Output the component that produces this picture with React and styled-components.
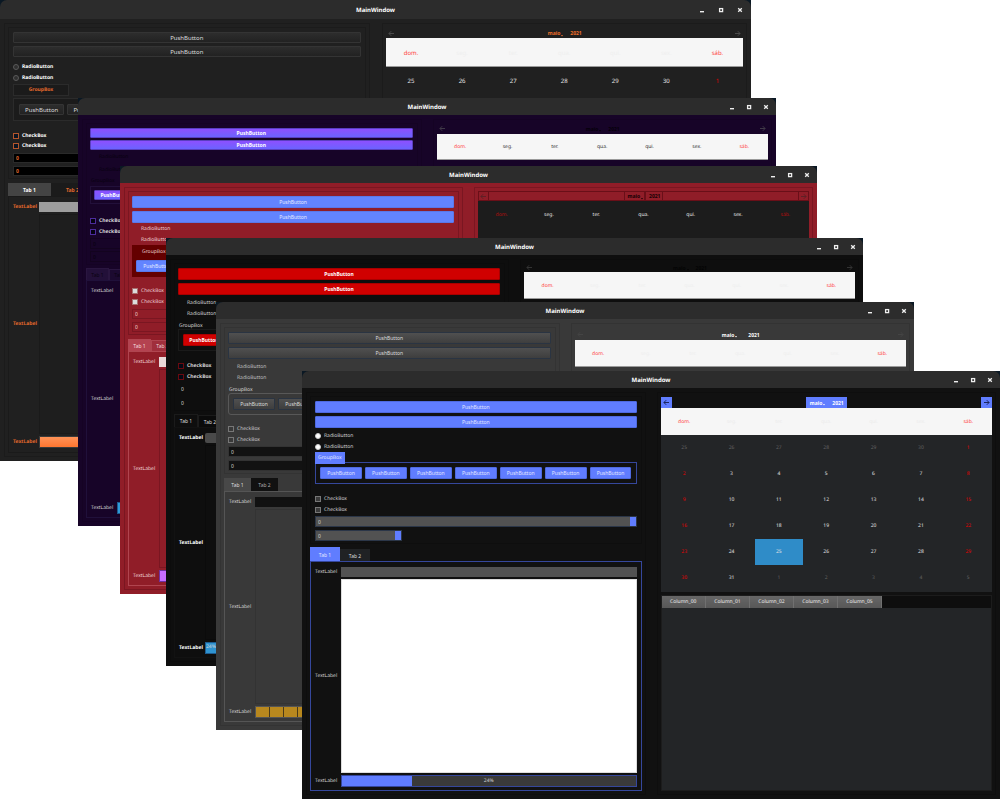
import React from "react";
import styled, { createGlobalStyle, css, ThemeProvider } from "styled-components";

const GlobalStyle = createGlobalStyle`
  *, *::before, *::after { box-sizing: border-box; }
  body { margin: 0; background: #fff; }
  button, input, textarea { font: inherit; color: inherit; margin: 0; padding: 0; border: 0; background: none; border-radius: 0; }
`;

/* ---------- themes ---------- */

const base = {
  titleH: 17, titleSize: 6, minH: 428, textSize: 5, buttonSize: 5, calendarSize: 5,
  bg: "#111", text: "#d4d4d4", frame: "#0d0d0d", panelGap: 11, padLeft: 3,
  btnH: 12, btnGap: 3, btnWeight: 400, btnText: "#ddd", btnBg: "#333", btnBorder: "transparent", btnRadius: 1,
  radioTop: 2, radioH: 11, radioText: "#d4d4d4", radioWeight: 400, radioBg: "transparent", radioBorder: "transparent",
  groupTop: 1, legendH: 11, legendOffset: -2, legendText: "#d4d4d4", legendBg: "transparent", legendBorder: "transparent",
  legendW: "auto", legendPad: 0, legendWeight: 400, groupBorder: "#1a1a1a", groupPad: 4, groupRadius: 0, groupBg: "transparent", enclosed: false,
  checkTop: 9, checkH: 11, checkBg: "transparent", checkBorder: "#666", checkText: "#d4d4d4", checkWeight: 400,
  spinTop: 1, spinH: 11, spinGap: 3, spinBg: "transparent", spinBorder: "transparent", spinText: "#d4d4d4", spinWeight: 400, stepper: "transparent",
  tabTop: 3, tabH: 14, tabW: 29, tabDrop: 2, tabActive: "#333", tabActiveText: "#ddd", tabIdle: "#222", tabIdleText: "#ddd", tabBorder: "transparent", tabWeight: 400,
  pageBorder: "#222", pagePad: "4px 4px 3px", labelText: "#d4d4d4", labelWeight: 400,
  lineBg: "#555", lineRadius: 0, editBg: "transparent", editBorder: "#111", barBg: "#3a3a3a", barBorder: "transparent", barFill: "#5c7cff",
  navH: 11, navTop: 0, navBtn: "transparent", navBorder: "transparent", navText: "#000", navArrow: "#333", navGap: 4,
  headBg: "#f6f6f6", headEdge: "#9a9a9a", headText: "#ececec", headRed: "#ff3a3a", headH: 27,
  gridBg: "#1c1c1c", rowH: 26, dayText: "#e4e4e4", dayOff: "#e4e4e4", dayRed: "#e80000",
};

const themes = {
  orange: {
    ...base, titleH: 19, minH: 461, buttonSize: 6, calendarSize: 6, panelGap: 12, padLeft: 4, bg: "#202020", frame: "#1b1b1b",
    btnH: 11, btnBg: "linear-gradient(#2d2d2d, #222)", btnBorder: "#343434",
    radioTop: 4, radioText: "#fff", radioWeight: 700, radioBg: "#303030", radioBorder: "#5a5a5a",
    legendH: 12, legendOffset: 2, legendText: "#e0672c", legendBg: "#1b1b1b", legendBorder: "#2b2b2b",
    legendW: "56px", legendWeight: 700, groupBorder: "#2b2b2b", groupPad: 5, groupBg: "#1b1b1b",
    checkTop: 10, checkH: 10, checkBg: "#0c1522", checkBorder: "#b4562c", checkText: "#fff", checkWeight: 700,
    spinTop: 2, spinH: 10, spinBg: "#000", spinBorder: "#2a2a2a", spinText: "#e0672c", spinWeight: 700,
    tabTop: 4, tabH: 13, tabW: 43, tabDrop: 0, tabActive: "#444", tabActiveText: "#fff", tabIdle: "#1b1b1b", tabIdleText: "#e0672c", tabWeight: 700,
    pageBorder: "#1a1a1a", pagePad: "4px 4px", labelText: "#e0672c", labelWeight: 700,
    lineBg: "#9e9e9e", editBg: "#1e1e1e", editBorder: "#1a1a1a", barFill: "linear-gradient(#ff9358, #ff7630)",
    navTop: 1, navH: 10, navText: "#f0702c", navArrow: "#4a4a4a", headH: 29, headText: "#efefef", gridBg: "#202020", rowH: 28,
  },
  violet: {
    ...base, bg: "#170428", frame: "#150324", btnH: 10, btnGap: 2, btnWeight: 700, btnText: "#fff",
    btnBg: "linear-gradient(#8d50ff, #6b63ff)", btnBorder: "#5a3fc0",
    radioTop: 0, radioH: 13, radioText: "#08010f", groupTop: 0, legendText: "#08010f", legendH: 10, legendOffset: 0, groupPad: 3, groupBorder: "#22103a",
    checkTop: 11, checkBg: "#050110", checkBorder: "#4c2c9c", checkWeight: 700,
    spinTop: 1, spinGap: 2, spinText: "#06010c", spinBorder: "#13031f",
    tabH: 12, tabW: 23, tabDrop: 1, tabActive: "#231039", tabActiveText: "#090210", tabIdle: "#1c0a30", tabIdleText: "#090210", tabBorder: "#2a1640",
    pageBorder: "#20103a", lineBg: "#170428", editBorder: "#170428", barFill: "#2f9bd8", barBorder: "#1d5c90",
    navText: "#050008", navArrow: "#403a48", headText: "#333", headH: 26, gridBg: "#170428",
  },
  crimson: {
    ...base, bg: "#901d28", frame: "#7a1621", text: "#eed4d6", btnBg: "#6284ff", btnBorder: "#5a78e8", btnText: "#e6eaff",
    radioTop: 0, radioText: "#eed4d6", groupTop: 0, enclosed: true, groupBg: "#640000", groupBorder: "#560000", legendText: "#e6caca", legendH: 14, legendOffset: 0, groupPad: 4,
    checkTop: 8, checkBg: "#dcdcdc", checkBorder: "#a87070", checkText: "#eed4d6",
    spinTop: 2, spinH: 10, spinText: "#eed4d6", spinBorder: "#7a1621",
    tabTop: 4, tabH: 12, tabW: 23, tabDrop: 1, tabActive: "#b44250", tabActiveText: "#f4dcde", tabIdle: "#a02f3c", tabIdleText: "#eed4d6", tabBorder: "#b04550",
    pageBorder: "#b04550", labelText: "#eed4d6", lineBg: "#e8d8d8", editBorder: "#7a1621", barFill: "#c86cff", barBorder: "#7030a0",
    navH: 10, navText: "#150003", navBorder: "#6a0f18", navArrow: "#5f2026", navGap: 2,
    headBg: "#1c1c1c", headEdge: "#1c1c1c", headText: "#e4e4e4", headRed: "#b80c0c", gridBg: "#1c1c1c",
  },
  red: {
    ...base, bg: "#0e0e0e", frame: "#0c0c0c", btnWeight: 700, btnBg: "#d00000", btnBorder: "#a80000", btnText: "#fff",
    checkBg: "#040a16", checkBorder: "#6a0a10", checkWeight: 700,
    tabH: 13, tabW: 24, tabDrop: 1, tabActive: "#0e0e0e", tabIdle: "#0b0b0b", tabBorder: "#1b1b1b", pageBorder: "#121212",
    labelText: "#fff", labelWeight: 700, lineBg: "#4a4a4a", lineRadius: 2, editBorder: "#0b0b0b", barFill: "#2f93d0", barBorder: "#1d5c90", barLeft: true,
    navH: 9, navText: "#040404", navArrow: "#333", headText: "#efefef", gridBg: "#0e0e0e",
  },
  slate: {
    ...base, bg: "#393939", frame: "#333", btnBg: "linear-gradient(#505050, #3e3e3e)", btnBorder: "#2a3442",
    radioText: "#c0c0c0", groupBorder: "#585858", groupRadius: 3, checkTop: 8, checkBorder: "#777", checkText: "#ccc",
    spinBg: "#121212", spinBorder: "#333", tabTop: 4, tabH: 13, tabW: 27, tabDrop: 0, tabActive: "#484848", tabIdle: "#111", tabIdleText: "#aaa",
    pageBorder: "#555", lineBg: "#111", editBorder: "#333", barBg: "#222", barBorder: "#555",
    barFill: "repeating-linear-gradient(90deg, #b8881e 0 13px, #4a3a18 13px 14px)",
    navTop: 2, navText: "#fff", navArrow: "#444", navGap: 12, headText: "#efefef", gridBg: "#393939",
  },
  blue: {
    ...base, padLeft: 4, bg: "#111", frame: "#0e0e0e", btnBg: "#607dff", btnBorder: "#4f6ae0", btnText: "#e0e5ff",
    radioBg: "#fff", radioBorder: "#ccc", groupTop: 0, legendH: 12, legendBg: "#607dff", legendText: "#e0e5ff", legendPad: 2, groupBorder: "#35479c",
    checkBg: "#3a3a3a", checkBorder: "#777", spinBg: "#525252", spinBorder: "#2b3648", stepper: "#607dff",
    tabW: 30, tabActive: "#607dff", tabActiveText: "#e0e5ff", tabIdle: "#202224",
    pageBorder: "#35479c", lineBg: "#525252", editBg: "#fff", editBorder: "#ddd", barBg: "#3a3a3a", barBorder: "#35479c", barFill: "#607dff",
    navTop: 1, navBtn: "#607dff", navText: "#fff", navArrow: "#1c2560", headText: "#ececec", headEdge: "#f6f6f6",
    gridBg: "#232527", dayOff: "#646464",
  },
};

/* ---------- window chrome ---------- */

const Desktop = styled.main`
  position: relative;
  min-height: 100vh;
  overflow: hidden;
  font-family: "Noto Sans", sans-serif;
  text-rendering: geometricPrecision;
`;

const Frame = styled.section`
  position: absolute;
  left: ${(p) => p.$x}%;
  top: ${(p) => p.$y}px;
  width: ${(p) => p.$w}%;
  min-height: ${(p) => p.theme.minH}px;
  display: flex;
  flex-direction: column;
  background: #0a1824;
  color: ${(p) => p.theme.text};
  font-size: ${(p) => p.theme.textSize}px;
  line-height: 8px;
  white-space: nowrap;
`;

const TitleBar = styled.header`
  display: grid;
  grid-template-columns: 1fr auto 1fr;
  align-items: center;
  height: ${(p) => p.theme.titleH}px;
  background: #2c2c2c;
  border-radius: 7px 7px 0 0;
`;

const Title = styled.h1`
  grid-column: 2;
  margin: 0;
  font-size: ${(p) => p.theme.titleSize}px;
  font-weight: 700;
  color: #fff;
`;

const Controls = styled.div`
  display: flex;
  justify-content: flex-end;
  padding-right: 2px;
`;

const ControlButton = styled.button`
  display: grid;
  place-items: center;
  width: ${(p) => p.theme.titleH}px;
  height: 12px;
  color: #eee;
`;

const Body = styled.div`
  flex: 1;
  display: grid;
  grid-template-columns: minmax(0, 1fr) minmax(0, 1fr);
  gap: ${(p) => p.theme.panelGap}px;
  padding: 4px;
  background: ${(p) => p.theme.bg};
`;

const Panel = styled.div`
  display: flex;
  flex-direction: column;
  border: 1px solid ${(p) => p.theme.frame};
  padding: 3px;
`;

/* ---------- left side ---------- */

const ControlsFrame = styled.div`
  border: 1px solid ${(p) => p.theme.frame};
  padding: 4px 4px 2px ${(p) => p.theme.padLeft}px;
`;

const Stack = styled.div`
  display: flex;
  flex-direction: column;
  gap: ${(p) => p.$gap || 0}px;
  margin-top: ${(p) => p.$top || 0}px;
`;

const PushButton = styled.button`
  height: ${(p) => p.theme.btnH}px;
  min-width: 0;
  overflow: hidden;
  border: 1px solid ${(p) => p.theme.btnBorder};
  border-radius: ${(p) => p.theme.btnRadius}px;
  background: ${(p) => p.theme.btnBg};
  color: ${(p) => p.theme.btnText};
  font-size: ${(p) => p.theme.buttonSize}px;
  font-weight: ${(p) => p.theme.btnWeight};
  line-height: 8px;
`;

const Choice = styled.label`
  display: flex;
  align-items: center;
  gap: 3px;
  height: ${(p) => (p.$radio ? p.theme.radioH : p.theme.checkH)}px;
  color: ${(p) => (p.$radio ? p.theme.radioText : p.theme.checkText)};
  font-weight: ${(p) => (p.$radio ? p.theme.radioWeight : p.theme.checkWeight)};
`;

const Indicator = styled.input`
  appearance: none;
  width: 6px;
  height: 6px;
  ${(p) =>
    p.type === "radio"
      ? css`border: 1px solid ${p.theme.radioBorder}; background: ${p.theme.radioBg}; border-radius: 50%;`
      : css`border: 1px solid ${p.theme.checkBorder}; background: ${p.theme.checkBg};`}
`;

const Group = styled.div`
  margin-top: ${(p) => p.theme.groupTop}px;
  ${(p) => p.theme.enclosed && css`background: ${p.theme.groupBg}; padding-bottom: 1px;`}
`;

const Legend = styled.div`
  display: flex;
  align-items: center;
  justify-content: center;
  position: relative;
  width: fit-content;
  min-width: ${(p) => p.theme.legendW};
  height: ${(p) => p.theme.legendH}px;
  margin-bottom: ${(p) => p.theme.legendOffset}px;
  margin-left: ${(p) => (p.theme.enclosed ? 9 : 0)}px;
  padding: 0 ${(p) => p.theme.legendPad}px;
  border: 1px solid ${(p) => p.theme.legendBorder};
  background: ${(p) => p.theme.legendBg};
  color: ${(p) => p.theme.legendText};
  font-weight: ${(p) => p.theme.legendWeight};
`;

const GroupFrame = styled.div`
  display: grid;
  grid-template-columns: repeat(7, minmax(0, 1fr));
  gap: 3px;
  padding: ${(p) => (p.theme.enclosed ? "0 3px 3px" : `${p.theme.groupPad}px`)};
  border: 1px solid ${(p) => (p.theme.enclosed ? "transparent" : p.theme.groupBorder)};
  border-radius: ${(p) => p.theme.groupRadius}px;
  background: ${(p) => (p.theme.enclosed ? "transparent" : p.theme.groupBg)};
`;

const SpinBox = styled.div`
  display: flex;
  width: ${(p) => (p.$short ? "27%" : "100%")};
  height: ${(p) => p.theme.spinH}px;
  border: 1px solid ${(p) => p.theme.spinBorder};
  background: ${(p) => p.theme.spinBg};
  color: ${(p) => p.theme.spinText};
  font-weight: ${(p) => p.theme.spinWeight};
`;

const SpinInput = styled.input`
  flex: 1;
  min-width: 0;
  padding-left: 2px;
  line-height: 8px;
`;

const Stepper = styled.button`
  width: 6px;
  background: ${(p) => p.theme.stepper};
`;

const TabBar = styled.div`
  display: flex;
  align-items: flex-end;
  height: ${(p) => p.theme.tabH}px;
  margin-top: ${(p) => p.theme.tabTop}px;
`;

const Tab = styled.button`
  min-width: ${(p) => p.theme.tabW}px;
  height: ${(p) => p.theme.tabH - (p.$active ? 0 : p.theme.tabDrop)}px;
  border: 1px solid ${(p) => p.theme.tabBorder};
  border-bottom: 0;
  background: ${(p) => (p.$active ? p.theme.tabActive : p.theme.tabIdle)};
  color: ${(p) => (p.$active ? p.theme.tabActiveText : p.theme.tabIdleText)};
  font-weight: ${(p) => p.theme.tabWeight};
  line-height: 8px;
`;

const TabPage = styled.div`
  flex: 1;
  display: grid;
  grid-template-columns: 26px minmax(0, 1fr);
  grid-template-rows: 11px minmax(0, 1fr) 12px;
  row-gap: 2px;
  align-items: center;
  padding: ${(p) => p.theme.pagePad};
  border: 1px solid ${(p) => p.theme.pageBorder};
`;

const FieldLabel = styled.label`
  color: ${(p) => p.theme.labelText};
  font-weight: ${(p) => p.theme.labelWeight};
`;

const LineEdit = styled.input`
  width: 100%;
  height: 10px;
  background: ${(p) => p.theme.lineBg};
  border-radius: ${(p) => p.theme.lineRadius}px;
`;

const TextEdit = styled.textarea`
  width: 100%;
  height: 100%;
  resize: none;
  background: ${(p) => p.theme.editBg};
  border: 1px solid ${(p) => p.theme.editBorder};
`;

const Bar = styled.div`
  display: grid;
  align-items: center;
  height: 12px;
  border: 1px solid ${(p) => p.theme.barBorder};
  background: ${(p) => p.theme.barBg};
`;

const BarFill = styled.div`
  grid-area: 1 / 1;
  height: 100%;
  background: ${(p) => p.theme.barFill};
`;

const BarText = styled.span`
  grid-area: 1 / 1;
  justify-self: ${(p) => (p.theme.barLeft ? "start" : "center")};
  align-self: ${(p) => (p.theme.barLeft ? "start" : "center")};
`;

/* ---------- right side ---------- */

const CalendarNav = styled.div`
  display: flex;
  justify-content: space-between;
  height: ${(p) => p.theme.navH}px;
  margin-top: ${(p) => p.theme.navTop}px;
  outline: 1px solid ${(p) => p.theme.navBorder};
  outline-offset: -1px;
  color: ${(p) => p.theme.navText};
`;

const NavButton = styled.button`
  display: grid;
  place-items: center;
  width: 11px;
  background: ${(p) => p.theme.navBtn};
  border: 1px solid ${(p) => p.theme.navBorder};
  color: ${(p) => p.theme.navArrow};
`;

const MonthYear = styled.div`
  display: flex;
`;

const PeriodButton = styled.button`
  display: flex;
  align-items: center;
  gap: 1px;
  padding: 0 ${(p) => (p.$month ? p.theme.navGap / 2 : 2)}px 0 3px;
  background: ${(p) => p.theme.navBtn};
  border: 1px solid ${(p) => p.theme.navBorder};
  border-width: 0 1px;
  font-weight: 700;
  line-height: 8px;
`;

const CalendarGrid = styled.div`
  flex: ${(p) => (p.$fill ? 1 : "none")};
  padding-bottom: 1px;
  background: ${(p) => p.theme.gridBg};
`;

const CalendarTable = styled.table`
  width: 100%;
  table-layout: fixed;
  border-collapse: collapse;
  font-size: ${(p) => p.theme.calendarSize}px;
  text-align: center;
`;

const WeekDay = styled.th`
  height: ${(p) => p.theme.headH}px;
  padding: 0;
  background: ${(p) => p.theme.headBg};
  box-shadow: inset 0 -1px ${(p) => p.theme.headEdge};
  color: ${(p) => (p.$weekend ? p.theme.headRed : p.theme.headText)};
  font-weight: 400;
`;

const Day = styled.td`
  height: ${(p) => p.theme.rowH}px;
  padding: 0;
  background: ${(p) => (p.$selected ? "#2f8cc8" : "transparent")};
  color: ${(p) => (p.$off && !p.$red ? p.theme.dayOff : p.$red ? p.theme.dayRed : p.theme.dayText)};
`;

const Sheet = styled.div`
  flex: 1;
  margin-top: 3px;
  background: #232527;
  border: 1px solid #1c1c1c;
`;

const SheetTable = styled.table`
  width: 100%;
  table-layout: fixed;
  border-collapse: collapse;
  background: #0e0e0e;
`;

const SheetHead = styled.th`
  width: ${(p) => (p.$rest ? "auto" : "44px")};
  height: 12px;
  padding: 0;
  background: ${(p) => (p.$rest ? "transparent" : "linear-gradient(#666, #585858)")};
  border-right: 1px solid ${(p) => (p.$rest ? "transparent" : "#707070")};
  color: #eee;
  font-weight: 400;
`;

/* ---------- glyphs ---------- */

const Minimize = () => (
  <svg width="6" height="6" viewBox="0 0 6 6"><path d="M1 4h4v1.4H1z" fill="currentColor" /></svg>
);
const Maximize = () => (
  <svg width="6" height="6" viewBox="0 0 6 6"><rect x="1.6" y="1.6" width="3" height="3" fill="none" stroke="currentColor" strokeWidth="1.3" /></svg>
);
const Close = () => (
  <svg width="6" height="6" viewBox="0 0 6 6"><path d="M1.2 1.2l3.6 3.6M4.8 1.2L1.2 4.8" stroke="currentColor" strokeWidth="1.3" /></svg>
);
const Arrow = ({ right }) => (
  <svg width="7" height="7" viewBox="0 0 7 7" fill="none" stroke="currentColor" strokeWidth="1">
    {right ? <path d="M1 3.5h5M3.8 1.2l2.3 2.3-2.3 2.3" /> : <path d="M6 3.5H1M3.2 1.2L.9 3.5l2.3 2.3" />}
  </svg>
);
const Caret = () => (
  <svg width="2" height="7" viewBox="0 0 2 7"><path d="M0 5h2L1 6.4z" fill="currentColor" /></svg>
);

/* ---------- composition ---------- */

const weekDays = ["dom.", "seg.", "ter.", "qua.", "qui.", "sex.", "sáb."];
const weeks = [
  [25, 26, 27, 28, 29, 30, 1],
  [2, 3, 4, 5, 6, 7, 8],
  [9, 10, 11, 12, 13, 14, 15],
  [16, 17, 18, 19, 20, 21, 22],
  [23, 24, 25, 26, 27, 28, 29],
  [30, 31, 1, 2, 3, 4, 5],
];
const columns = ["Column_00", "Column_01", "Column_02", "Column_03", "Column_05"];

function Calendar({ weekCount, fill }) {
  return (
    <>
      <CalendarNav>
        <NavButton aria-label="Previous month"><Arrow /></NavButton>
        <MonthYear>
          <PeriodButton $month>maio<Caret /></PeriodButton>
          <PeriodButton>2021</PeriodButton>
        </MonthYear>
        <NavButton aria-label="Next month"><Arrow right /></NavButton>
      </CalendarNav>
      <CalendarGrid $fill={fill}>
        <CalendarTable>
          <thead>
            <tr>
              {weekDays.map((d, i) => <WeekDay key={d} scope="col" $weekend={i % 6 === 0}>{d}</WeekDay>)}
            </tr>
          </thead>
          <tbody>
            {weeks.slice(0, weekCount).map((week, w) => (
              <tr key={w}>
                {week.map((d, i) => {
                  const off = (w === 0 && d > 20) || (w === 5 && d < 20);
                  return (
                    <Day key={i} $off={off} $red={(i === 0 || i === 6) && !off} $selected={w === 4 && d === 25}>{d}</Day>
                  );
                })}
              </tr>
            ))}
          </tbody>
        </CalendarTable>
      </CalendarGrid>
    </>
  );
}

function MainWindow({ name, x, y, w = 69.8, groupButtons = 1, weekCount = 0, showSheet, showPercent }) {
  const theme = themes[name];
  return (
    <ThemeProvider theme={theme}>
      <Frame $x={x} $y={y} $w={w}>
        <TitleBar>
          <Title>MainWindow</Title>
          <Controls>
            <ControlButton aria-label="Minimize"><Minimize /></ControlButton>
            <ControlButton aria-label="Maximize"><Maximize /></ControlButton>
            <ControlButton aria-label="Close"><Close /></ControlButton>
          </Controls>
        </TitleBar>
        <Body>
          <Panel>
            <ControlsFrame>
              <Stack $gap={theme.btnGap}>
                <PushButton>PushButton</PushButton>
                <PushButton>PushButton</PushButton>
              </Stack>
              <Stack $top={theme.radioTop}>
                <Choice $radio><Indicator type="radio" name={`${name}-radio`} />RadioButton</Choice>
                <Choice $radio><Indicator type="radio" name={`${name}-radio`} />RadioButton</Choice>
              </Stack>
              <Group role="group" aria-labelledby={`${name}-group`}>
                <Legend id={`${name}-group`}>GroupBox</Legend>
                <GroupFrame>
                  {Array.from({ length: groupButtons }, (_, i) => <PushButton key={i}>PushButton</PushButton>)}
                </GroupFrame>
              </Group>
              <Stack $top={theme.checkTop}>
                <Choice><Indicator type="checkbox" />CheckBox</Choice>
                <Choice><Indicator type="checkbox" />CheckBox</Choice>
              </Stack>
              <Stack $top={theme.spinTop} $gap={theme.spinGap}>
                <SpinBox><SpinInput aria-label="Value" defaultValue="0" /><Stepper aria-label="Step value" /></SpinBox>
                <SpinBox $short><SpinInput aria-label="Second value" defaultValue="0" /><Stepper aria-label="Step second value" /></SpinBox>
              </Stack>
            </ControlsFrame>
            <TabBar role="tablist">
              <Tab role="tab" aria-selected="true" $active>Tab 1</Tab>
              <Tab role="tab" aria-selected="false">Tab 2</Tab>
            </TabBar>
            <TabPage role="tabpanel">
              <FieldLabel htmlFor={`${name}-line`}>TextLabel</FieldLabel>
              <LineEdit id={`${name}-line`} />
              <FieldLabel htmlFor={`${name}-text`}>TextLabel</FieldLabel>
              <TextEdit id={`${name}-text`} />
              <FieldLabel as="span" id={`${name}-bar`}>TextLabel</FieldLabel>
              <Bar role="progressbar" aria-labelledby={`${name}-bar`} aria-valuenow={24} aria-valuemin={0} aria-valuemax={100}>
                <BarFill style={{ width: "24%" }} />
                {showPercent && <BarText>24%</BarText>}
              </Bar>
            </TabPage>
          </Panel>
          <Panel>
            <Calendar weekCount={weekCount} fill={!showSheet} />
            {showSheet && (
              <Sheet>
                <SheetTable>
                  <thead>
                    <tr>
                      {columns.map((c) => <SheetHead key={c} scope="col">{c}</SheetHead>)}
                      <SheetHead as="td" $rest />
                    </tr>
                  </thead>
                </SheetTable>
              </Sheet>
            )}
          </Panel>
        </Body>
      </Frame>
    </ThemeProvider>
  );
}

export default function App() {
  return (
    <Desktop>
      <GlobalStyle />
      <MainWindow name="orange" x={0} y={0} w={75.1} groupButtons={2} weekCount={1} />
      <MainWindow name="violet" x={7.8} y={98} />
      <MainWindow name="crimson" x={12} y={166} w={69.7} />
      <MainWindow name="red" x={16.6} y={238} w={69.7} showPercent />
      <MainWindow name="slate" x={21.6} y={302} groupButtons={2} />
      <MainWindow name="blue" x={30.2} y={371} groupButtons={7} weekCount={6} showSheet showPercent />
    </Desktop>
  );
}
